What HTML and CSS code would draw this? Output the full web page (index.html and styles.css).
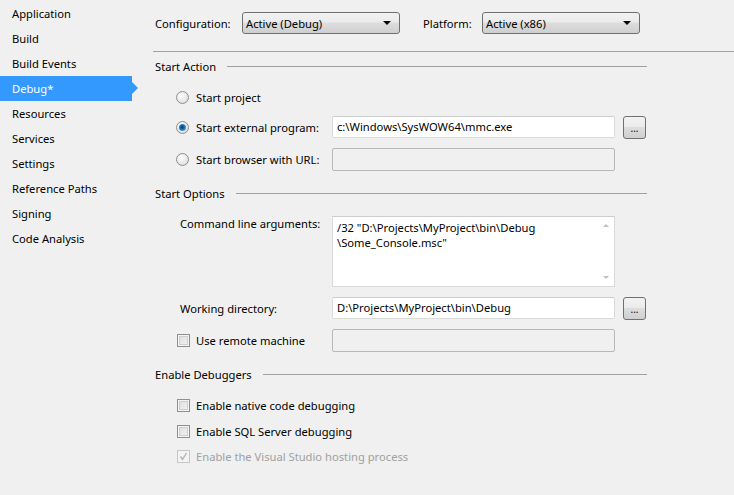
FILE: index.html
```html
<!DOCTYPE html>
<html>
<head>
<meta charset="utf-8">
<link rel="stylesheet" href="styles.css">
</head>
<body>
<div class="page">
  <nav class="nav">
    <div class="nav-item">Application</div>
    <div class="nav-item">Build</div>
    <div class="nav-item">Build Events</div>
    <div class="nav-item selected">Debug*</div>
    <div class="nav-item">Resources</div>
    <div class="nav-item">Services</div>
    <div class="nav-item">Settings</div>
    <div class="nav-item">Reference Paths</div>
    <div class="nav-item">Signing</div>
    <div class="nav-item">Code Analysis</div>
  </nav>
  <main class="main">
    <div class="config-bar">
      <span class="cfg-label">Configuration:</span>
      <div class="combo"><span>Active (Debug)</span><span class="combo-arrow"></span></div>
      <span class="cfg-label plat">Platform:</span>
      <div class="combo"><span>Active (x86)</span><span class="combo-arrow"></span></div>
    </div>
    <div class="content">
      <div class="section-head"><span>Start Action</span><span class="rule"></span></div>
      <div class="row r-project"><span class="radio"></span><span class="lbl">Start project</span></div>
      <div class="row r-ext"><span class="radio checked"></span><span class="lbl lbl-w">Start external program:</span><div class="textbox">c:\Windows\SysWOW64\mmc.exe</div><div class="btn">...</div></div>
      <div class="row r-url"><span class="radio"></span><span class="lbl lbl-w">Start browser with URL:</span><div class="textbox disabled"></div></div>

      <div class="section-head h-options"><span>Start Options</span><span class="rule"></span></div>
      <div class="row r-cmd"><span class="plain-lbl">Command line arguments:</span>
        <div class="textarea"><div class="ta-text"><div>/32 "D:\Projects\MyProject\bin\Debug</div><div>\Some_Console.msc"</div></div><div class="scroll"><span class="sa up"></span><span class="sa down"></span></div></div>
      </div>
      <div class="row r-wd"><span class="plain-lbl">Working directory:</span><div class="textbox">D:\Projects\MyProject\bin\Debug</div><div class="btn">...</div></div>
      <div class="row r-remote"><span class="check"></span><span class="lbl lbl-w cb">Use remote machine</span><div class="textbox disabled"></div></div>

      <div class="section-head h-debug"><span>Enable Debuggers</span><span class="rule"></span></div>
      <div class="row r-c1"><span class="check"></span><span class="lbl cb">Enable native code debugging</span></div>
      <div class="row r-c2"><span class="check"></span><span class="lbl cb">Enable SQL Server debugging</span></div>
      <div class="row r-c3 dis"><span class="check checked-dis"><svg width="11" height="11" viewBox="0 0 11 11"><path d="M2.5 5.5 L4.5 8.5 L8.5 2" fill="none" stroke="#b4b4b4" stroke-width="1.4"/></svg></span><span class="lbl cb">Enable the Visual Studio hosting process</span></div>
    </div>
  </main>
</div>
</body>
</html>
```
FILE: styles.css
```css
html, body {
  margin: 0;
  padding: 0;
  background: #f0f0f0;
  width: 734px;
  height: 495px;
  overflow: hidden;
}
body {
  font-family: "Noto Sans", "Open Sans", sans-serif;
  font-size: 11.2px;
  color: #000;
}
.page {
  display: flex;
  height: 495px;
}
.nav {
  width: 138px;
  flex: none;
  padding-top: 1px;
}
.nav-item {
  height: 25px;
  line-height: 25px;
  padding-left: 12px;
  width: 120px;
  position: relative;
  white-space: nowrap;
}
.nav-item.selected {
  background: #3399ff;
  color: #fff;
}
.nav-item.selected::after {
  content: "";
  position: absolute;
  right: -6px;
  top: 6px;
  border-left: 6px solid #3399ff;
  border-top: 6px solid transparent;
  border-bottom: 6px solid transparent;
}
.main {
  flex: 1;
  padding-left: 15px;
}
.config-bar {
  border-bottom: 1px solid #a0a0a0;
  display: flex;
  align-items: center;
  padding-left: 2px;
  box-sizing: border-box;
  height: 52px;
  padding-bottom: 5px;
}
.cfg-label {
  width: 87px;
}
.cfg-label.plat {
  width: 59px;
  margin-left: 23px;
}
.combo {
  width: 158px;
  height: 22px;
  box-sizing: border-box;
  border: 1px solid #707070;
  border-radius: 3px;
  background: linear-gradient(#f2f2f2 0%, #ebebeb 45%, #dddddd 50%, #cfcfcf 100%);
  display: flex;
  align-items: center;
  justify-content: space-between;
  padding: 0 8px 0 3px;
}
.combo-arrow {
  width: 0;
  height: 0;
  border-top: 4px solid #000;
  border-left: 4px solid transparent;
  border-right: 4px solid transparent;
}
.content {
  width: 492px;
  padding-left: 2px;
}
.section-head {
  display: flex;
  align-items: center;
  height: 16px;
  margin-top: 6px;
}
.section-head .rule {
  flex: 1;
  height: 1px;
  background: #a0a0a0;
  margin-left: 11px;
}
.h-options { margin-top: 14px; }
.h-debug { margin-top: 14px; }
.row {
  display: flex;
  align-items: center;
  height: 22px;
  padding-left: 21px;
}
.r-project { margin-top: 12px; }
.r-ext { margin-top: 8px; }
.r-url { margin-top: 10px; height: 23px; }
.r-cmd { margin-top: 15px; height: 71px; align-items: flex-start; padding-left: 25px; }
.r-wd { margin-top: 10px; padding-left: 25px; }
.r-remote { margin-top: 10px; height: 23px; padding-left: 22px; }
.r-c1 { margin-top: 12px; padding-left: 22px; }
.r-c2 { margin-top: 4px; padding-left: 22px; }
.r-c3 { margin-top: 3px; padding-left: 22px; }
.dis .lbl { color: #a0a0a0; }

.radio {
  width: 13px;
  height: 13px;
  box-sizing: border-box;
  border-radius: 50%;
  border: 1px solid #8e8f8f;
  background: radial-gradient(circle at 40% 35%, #ffffff 0%, #e6e6e6 60%, #cfcfcf 100%);
  flex: none;
  position: relative;
}
.radio.checked::after {
  content: "";
  position: absolute;
  left: 2px;
  top: 2px;
  width: 7px;
  height: 7px;
  border-radius: 50%;
  background: radial-gradient(circle at 45% 45%, #0a3c66 0%, #1c6aa8 40%, #48a6e6 75%, #8fd0f5 100%);
}
.check {
  width: 13px;
  height: 13px;
  box-sizing: border-box;
  border: 1px solid #8e8f8f;
  background: linear-gradient(135deg, #dcdcdc 0%, #f4f4f4 100%);
  box-shadow: inset 0 0 0 1px #f4f4f4, inset 0 0 0 2px #cfcfcf;
  flex: none;
  display: flex;
  align-items: center;
  justify-content: center;
}
.check.checked-dis {
  border-color: #c6c6c6;
  background: #f4f4f4;
  box-shadow: none;
}
.lbl {
  margin-left: 7px;
  white-space: nowrap;
}
.lbl.cb {
  margin-left: 6px;
}
.lbl-w {
  width: 136px;
  flex: none;
}
.plain-lbl {
  width: 152px;
  flex: none;
}
.r-cmd .plain-lbl { line-height: 16px; }
.textbox {
  width: 283px;
  height: 22px;
  box-sizing: border-box;
  background: #fff;
  border: 1px solid #dadada;
  border-top-color: #cdcdcd;
  border-radius: 2px;
  padding: 0 4px;
  line-height: 20px;
  white-space: nowrap;
  flex: none;
}
.r-url .textbox, .r-remote .textbox { height: 23px; }
.textbox.disabled {
  background: #f0f0f0;
  border-color: #b8b8b8;
}
.btn {
  width: 23px;
  height: 23px;
  box-sizing: border-box;
  margin-left: 8px;
  border: 1px solid #707070;
  border-radius: 3px;
  background: linear-gradient(#f2f2f2 0%, #ebebeb 45%, #dddddd 50%, #cfcfcf 100%);
  text-align: center;
  line-height: 22px;
  font-size: 10px;
  flex: none;
}
.textarea {
  width: 283px;
  height: 71px;
  box-sizing: border-box;
  background: #fff;
  border: 1px solid #dadada;
  border-top-color: #cdcdcd;
  display: flex;
  flex: none;
}
.ta-text {
  flex: 1;
  padding: 3px 4px;
  line-height: 15px;
  white-space: nowrap;
}
.scroll {
  width: 17px;
  background: #fff;
  display: flex;
  flex-direction: column;
  justify-content: space-between;
  align-items: center;
  padding: 7px 0 7px;
}
.sa {
  width: 0;
  height: 0;
  border-left: 3px solid transparent;
  border-right: 3px solid transparent;
}
.sa.up { border-bottom: 3px solid #c0c0c0; }
.sa.down { border-top: 3px solid #c0c0c0; }
```
